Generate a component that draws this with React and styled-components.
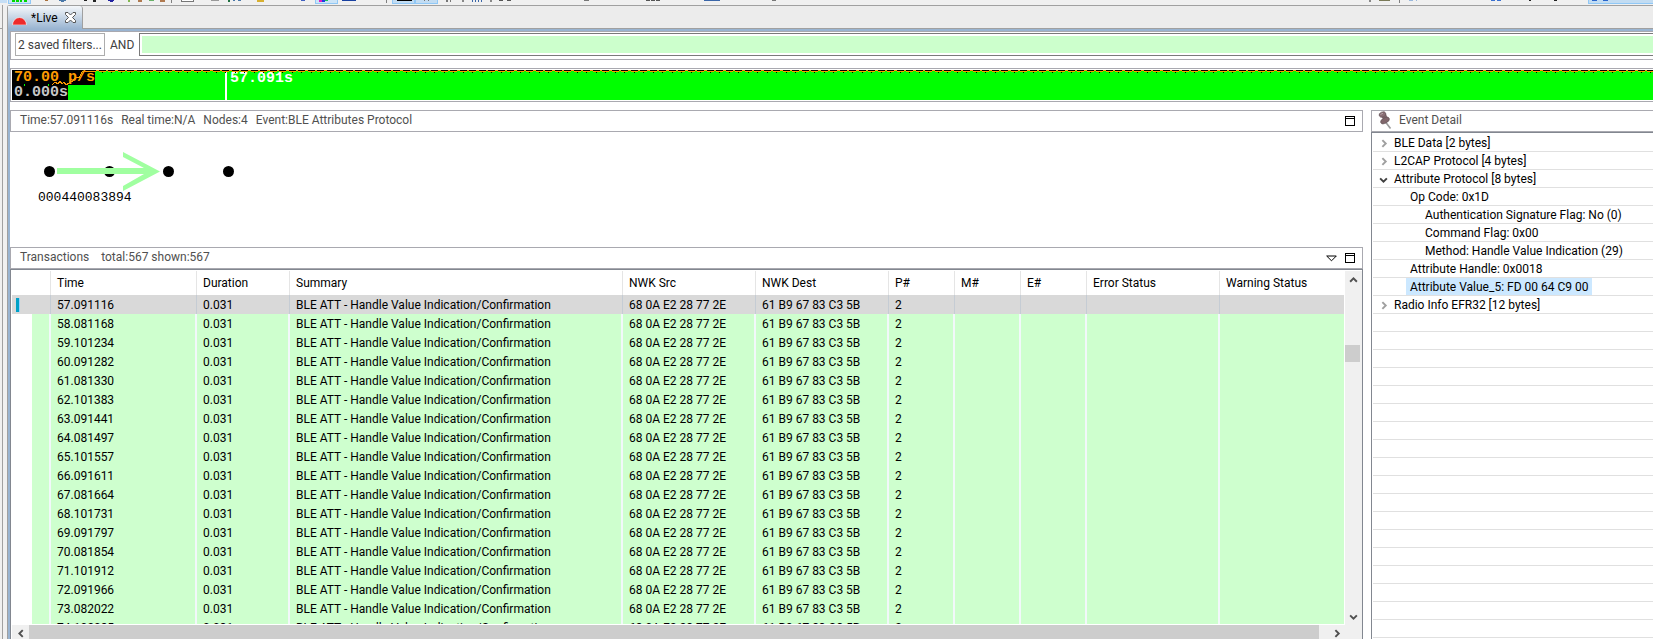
import React from "react";
import styled, { createGlobalStyle } from "styled-components";

const columns = [
	{ key: "mark", label: "", width: 39 },
	{ key: "time", label: "Time", width: 146 },
	{ key: "duration", label: "Duration", width: 93 },
	{ key: "summary", label: "Summary", width: 333 },
	{ key: "src", label: "NWK Src", width: 133 },
	{ key: "dest", label: "NWK Dest", width: 133 },
	{ key: "p", label: "P#", width: 66 },
	{ key: "m", label: "M#", width: 66 },
	{ key: "e", label: "E#", width: 66 },
	{ key: "error", label: "Error Status", width: 133 },
	{ key: "warning", label: "Warning Status" },
];

const times = [
	"57.091116",
	"58.081168",
	"59.101234",
	"60.091282",
	"61.081330",
	"62.101383",
	"63.091441",
	"64.081497",
	"65.101557",
	"66.091611",
	"67.081664",
	"68.101731",
	"69.091797",
	"70.081854",
	"71.101912",
	"72.091966",
	"73.082022",
	"74.102085",
];

const transactions = times.map((time) => ({
	time,
	duration: "0.031",
	summary: "BLE ATT - Handle Value Indication/Confirmation",
	src: "68 0A E2 28 77 2E",
	dest: "61 B9 67 83 C3 5B",
	p: "2",
}));

const eventTree = [
	{ text: "BLE Data [2 bytes]", level: 0, state: "closed" },
	{ text: "L2CAP Protocol [4 bytes]", level: 0, state: "closed" },
	{ text: "Attribute Protocol [8 bytes]", level: 0, state: "open" },
	{ text: "Op Code: 0x1D", level: 1 },
	{ text: "Authentication Signature Flag: No (0)", level: 2 },
	{ text: "Command Flag: 0x00", level: 2 },
	{ text: "Method: Handle Value Indication (29)", level: 2 },
	{ text: "Attribute Handle: 0x0018", level: 1 },
	{ text: "Attribute Value_5: FD 00 64 C9 00", level: 1, selected: true },
	{ text: "Radio Info EFR32 [12 bytes]", level: 0, state: "closed" },
];

// [x, y, width, height, colour]
const leftTools = [
	[0, 0, 7, 3, "#c5def5"],
	[8, 0, 23, 4, "#90c8f6"],
	[9, 0, 21, 3, "#cce4f7"],
	[12, 0, 3, 2, "#00d800"],
	[16, 0, 3, 2, "#00d800"],
	[20, 0, 2, 2, "#00d800"],
	[24, 0, 3, 2, "#00d800"],
	[45, 0, 3, 1, "#a9713d"],
	[59, 0, 7, 1, "#4a78a8"],
	[61, 1, 3, 1, "#4a78a8"],
	[84, 0, 3, 1, "#222"],
	[93, 0, 3, 2, "#222"],
	[108, 0, 6, 1, "#2222a0"],
	[110, 1, 3, 1, "#2222a0"],
	[128, 0, 2, 2, "#84b850"],
	[138, 0, 4, 2, "#b07a50"],
	[149, 0, 5, 1, "#68b068"],
	[160, 0, 5, 2, "#b07a50"],
	[171, 0, 1, 3, "#808080"],
	[181, 0, 13, 2, "#777"],
	[182, 0, 11, 1, "#fff"],
	[211, 0, 8, 1, "#999"],
	[228, 0, 2, 2, "#207040"],
	[233, 0, 2, 1, "#4a78a8"],
	[238, 0, 3, 1, "#4a78a8"],
	[257, 0, 7, 2, "#d8b030"],
	[301, 0, 4, 1, "#4060c0"],
	[315, 0, 23, 4, "#90c8f6"],
	[316, 0, 21, 3, "#cce4f7"],
	[319, 0, 3, 2, "#e020c0"],
	[322, 0, 3, 2, "#2040e0"],
	[325, 0, 3, 1, "#20c060"],
	[342, 0, 14, 1, "#1840a0"],
	[386, 0, 1, 3, "#808080"],
	[392, 0, 46, 4, "#90c8f6"],
	[393, 0, 21, 3, "#c2dcf2"],
	[416, 0, 21, 3, "#c2dcf2"],
	[397, 0, 15, 1, "#000"],
	[424, 0, 1, 1, "#777"],
	[428, 0, 1, 1, "#777"],
	[446, 0, 2, 2, "#777"],
	[450, 0, 1, 2, "#777"],
	[462, 0, 2, 2, "#888"],
	[472, 0, 1, 2, "#3b66a8"],
	[475, 0, 1, 2, "#3b66a8"],
	[478, 0, 1, 2, "#3b66a8"],
	[481, 0, 1, 2, "#3b66a8"],
	[490, 0, 2, 2, "#888"],
	[499, 0, 4, 1, "#555"],
	[507, 0, 4, 1, "#555"],
	[584, 0, 5, 1, "#777"],
	[646, 0, 4, 1, "#555"],
	[651, 0, 4, 1, "#555"],
	[656, 0, 4, 1, "#555"],
	[704, 0, 16, 1, "#3b66a8"],
	[772, 0, 4, 1, "#777"],
];

const rightTools = [
	[9, 0, 2, 2, "#888"],
	[19, 0, 11, 1, "#7a7a58"],
	[39, 0, 1, 3, "#808080"],
	[49, 0, 4, 1, "#9ab8dc"],
	[56, 0, 1, 1, "#9ab8dc"],
	[131, 0, 4, 1, "#3a70d0"],
	[137, 0, 4, 1, "#3a70d0"],
	[169, 0, 2, 1, "#222"],
	[194, 0, 3, 1, "#222"],
	[228, 0, 65, 4, "#90c8f6"],
	[229, 0, 64, 3, "#c2dcf2"],
	[232, 0, 5, 1, "#2a66cc"],
	[243, 0, 5, 1, "#2a66cc"],
];

const ToolStrip = ({ items, width }) => (
	<svg width={width} height="5" shapeRendering="crispEdges" aria-hidden="true">
		{items.map(([x, y, w, h, fill], id) => (
			<rect key={id} x={x} y={y} width={w} height={h} fill={fill} />
		))}
	</svg>
);

const arrows = {
	up: "M1 6 L4 3 L7 6",
	down: "M1 3 L4 6 L7 3",
	left: "M6 1 L3 4 L6 7",
	right: "M3 1 L6 4 L3 7",
};

const Arrow = ({ dir, color = "#505050" }) => (
	<svg width="9" height="9" viewBox="0 0 8 8" aria-hidden="true">
		<path d={arrows[dir]} fill="none" stroke={color} strokeWidth="1.7" />
	</svg>
);

const MaximizeIcon = () => (
	<svg width="10" height="10" shapeRendering="crispEdges" aria-hidden="true">
		<path d="M0.500 0.500 H9.500 V9.500 H0.500 Z M0 2.500 H10" fill="none" stroke="#000" />
	</svg>
);

const MenuIcon = () => (
	<svg width="11" height="7" aria-hidden="true">
		<path d="M0.700 1 H10.300 L5.500 5.800 Z" fill="none" stroke="#000" />
	</svg>
);

const PinIcon = () => (
	<svg width="14" height="18" viewBox="0 0 14 18" aria-hidden="true">
		<path d="M7.500 11 L12.500 17.500" stroke="#9a9a9a" strokeWidth="1.600" />
		<path d="M3 5 L8 3 L10 8 L6 10 Z" fill="#80666b" />
		<ellipse cx="4.500" cy="3.500" rx="3.500" ry="2.500" fill="#8a6f75" stroke="#65565a" strokeWidth="0.700" transform="rotate(-22 4.500 3.500)" />
		<ellipse cx="7" cy="9.500" rx="4.700" ry="2.600" fill="#80666b" stroke="#65565a" strokeWidth="0.700" transform="rotate(-28 7 9.500)" />
		<path d="M2.500 3.500 L5 2.200" stroke="#b9a6aa" />
	</svg>
);

const CloseIcon = () => (
	<svg width="11" height="11" viewBox="0 0 11 11" aria-hidden="true">
		<path
			d="M0.500 0.500 H3 L5.500 3 L8 0.500 H10.500 V2.500 L7.500 5.500 L10.500 8.500 V10.500 H8 L5.500 8 L3 10.500 H0.500 V8.500 L3.500 5.500 L0.500 2.500 Z"
			fill="#fff"
			stroke="#555"
		/>
	</svg>
);

const RateTrace = () => (
	<Trace aria-hidden="true">
		<defs>
			<pattern id="rate" width="19" height="3" patternUnits="userSpaceOnUse">
				<rect width="19" height="1" fill="#ff9a00" />
				<rect x="1" width="7" height="1" fill="#000" />
				<rect x="11" width="7" height="1" fill="#000" />
				<rect x="1" y="1" width="7" height="1" fill="#ff9a00" />
				<rect x="11" y="1" width="7" height="1" fill="#ff9a00" />
				<rect x="4" y="2" width="1" height="1" fill="#000" />
				<rect x="14" y="2" width="1" height="1" fill="#000" />
			</pattern>
		</defs>
		<rect x="80" width="100%" height="3" fill="url(#rate)" />
		<path d="M12.500 16 V14 M36.500 16 V14" stroke="#0f0" />
		<path d="M40 15 L43 12 L46 14 L48 11 L50 14 L52 12 L54 15 L57 13 L61 11 L64 7 L67 8 L70 2 L73 1 L82 1" fill="none" stroke="#ff9a00" />
	</Trace>
);

const NodeMap = () => (
	<svg width="300" height="114" role="img" aria-label="Nodes">
		<g fill="#000">
			<circle cx="39.500" cy="39.500" r="5.500" />
			<circle cx="99.500" cy="39.500" r="5.500" />
			<circle cx="158.500" cy="39.500" r="5.500" />
			<circle cx="218.500" cy="39.500" r="5.500" />
		</g>
		<path d="M47 36 H134 L113 25 V20 L150 39.500 L113 59 V54 L134 42 H47 Z" fill="#a0ffa0" />
		<NodeLabel x="28" y="69">
			000440083894
		</NodeLabel>
	</svg>
);

function EventTree() {
	return (
		<Tree>
			{eventTree.map(({ text, level, state, selected }) => (
				<TreeItem key={text} $level={level}>
					<TreeToggle>
						{state === "closed" && <Arrow dir="right" color="#a0a0a0" />}
						{state === "open" && <Arrow dir="down" color="#404040" />}
					</TreeToggle>
					<TreeText $selected={selected}>{text}</TreeText>
				</TreeItem>
			))}
		</Tree>
	);
}

function Transactions() {
	return (
		<TableFrame>
			<TableView>
				<Table>
					<colgroup>
						{columns.map(({ key, width }) => (
							<col key={key} width={width} />
						))}
					</colgroup>
					<thead>
						<tr>
							{columns.map(({ key, label }) => (
								<HeadCell key={key}>{label}</HeadCell>
							))}
						</tr>
					</thead>
					<tbody>
						{transactions.map((row, id) => (
							<Row key={row.time} $selected={id === 0}>
								{columns.map(({ key }) => (
									<Cell key={key}>{key === "mark" && id === 0 ? <Marker /> : row[key]}</Cell>
								))}
							</Row>
						))}
					</tbody>
				</Table>
			</TableView>
			<VerticalBar>
				<ScrollButton aria-label="Scroll up">
					<Arrow dir="up" />
				</ScrollButton>
				<VerticalThumb />
				<ScrollButton aria-label="Scroll down">
					<Arrow dir="down" />
				</ScrollButton>
			</VerticalBar>
			<HorizontalBar>
				<ScrollButton aria-label="Scroll left">
					<Arrow dir="left" />
				</ScrollButton>
				<HorizontalThumb />
				<ScrollButton aria-label="Scroll right">
					<Arrow dir="right" />
				</ScrollButton>
			</HorizontalBar>
		</TableFrame>
	);
}

function App() {
	return (
		<>
			<GlobalStyle />
			<Window>
				<Toolbar>
					<ToolStrip items={leftTools} width={800} />
					<ToolStrip items={rightTools} width={293} />
				</Toolbar>
				<Workbench>
					<Rail>
						<RailCorner />
					</Rail>
					<Editor>
						<TabBar>
							<Tab>
								<svg width="15" height="8" aria-hidden="true">
									<path d="M0.500 8 A7 7.500 0 0 1 14.500 8 Z" fill="#ee2a2a" stroke="#fff" strokeOpacity="0.600" />
								</svg>
								<TabName>*Live</TabName>
								<IconButton aria-label="Close">
									<CloseIcon />
								</IconButton>
							</Tab>
						</TabBar>
						<Page>
							<FilterBar>
								<FilterButton>2 saved filters...</FilterButton>
								<label htmlFor="filter">AND</label>
								<FilterInput id="filter" type="text" />
							</FilterBar>
							<Timeline>
								<Graph>
									<Readouts>
										<Readout $color="#ff9a00">70.00 p/s</Readout>
										<Readout $color="#c8c8c8">0.000s</Readout>
									</Readouts>
									<Cursor>57.091s</Cursor>
									<RateTrace />
								</Graph>
							</Timeline>
							<Panes>
								<MainPane>
									<PaneHeader $tight>
										<span>Time:57.091116s</span>
										<span>Real time:N/A</span>
										<span>Nodes:4</span>
										<span>Event:BLE Attributes Protocol</span>
										<Actions>
											<IconButton aria-label="Maximize map">
												<MaximizeIcon />
											</IconButton>
										</Actions>
									</PaneHeader>
									<MapArea>
										<NodeMap />
									</MapArea>
									<PaneHeader>
										<span>Transactions</span>
										<span>total:567 shown:567</span>
										<Actions>
											<IconButton aria-label="View menu">
												<MenuIcon />
											</IconButton>
											<IconButton aria-label="Maximize transactions">
												<MaximizeIcon />
											</IconButton>
										</Actions>
									</PaneHeader>
									<Transactions />
								</MainPane>
								<DetailPane>
									<DetailHeader>
										<PinIcon />
										<span>Event Detail</span>
									</DetailHeader>
									<EventTree />
								</DetailPane>
							</Panes>
						</Page>
					</Editor>
				</Workbench>
			</Window>
		</>
	);
}

export default App;

const GlobalStyle = createGlobalStyle`
	* {
		box-sizing: border-box;
	}

	body {
		margin: 0;
		overflow: hidden;
		font-family: "Roboto", sans-serif;
		font-size: 12px;
		line-height: 18px;
		color: #000;
	}

	button, input {
		font: inherit;
		color: inherit;
		border-radius: 0;
		margin: 0;
	}

	svg {
		display: block;
		flex-shrink: 0;
	}
`;

const Window = styled.div`
	height: 100vh;
	display: flex;
	flex-direction: column;
	background: #f0f0f0;
`;

const Toolbar = styled.header`
	display: flex;
	justify-content: space-between;
	height: 5px;
`;

const Workbench = styled.div`
	flex: 1;
	min-height: 0;
	display: flex;
	gap: 4px;
`;

const Rail = styled.div`
	width: 3px;
	border-right: 1px solid #a0a0a0;
`;

const RailCorner = styled.div`
	height: 24px;
	border-bottom: 1px solid #a0a0a0;
`;

const Editor = styled.section`
	flex: 1;
	min-width: 0;
	display: flex;
	flex-direction: column;
	border-left: 1px solid #a0a0a0;
	border-top: 1px solid #a0a0a0;
	border-top-left-radius: 3px;
`;

const TabBar = styled.div`
	display: flex;
	height: 23px;
	background: #ececec;
	border-bottom: 1px solid #a0a0a0;
`;

const Tab = styled.div`
	display: flex;
	align-items: center;
	height: 23px;
	width: 75px;
	padding-left: 4px;
	background: linear-gradient(#f4f7fa, #99b4d1);
	border-right: 1px solid #a0a0a0;
	border-top-right-radius: 3px;

	> svg {
		align-self: flex-end;
		margin-bottom: 4px;
	}
`;

const TabName = styled.span`
	margin: 0 7px 0 4px;
`;

const IconButton = styled.button`
	padding: 0;
	border: 0;
	background: none;
`;

const Page = styled.div`
	flex: 1;
	min-height: 0;
	display: flex;
	flex-direction: column;
	border-left: 2px solid #99b4d1;
	border-top: 2px solid #99b4d1;
	background: #fff;
`;

const FilterBar = styled.div`
	display: flex;
	align-items: center;
	height: 29px;
	padding: 1px 0 3px 4px;
	border: 1px solid #a9a9b0;
	border-right: 0;
	color: #404040;

	label {
		margin: 0 5px;
	}
`;

const FilterButton = styled.button`
	align-self: flex-end;
	width: 90px;
	height: 23px;
	padding: 0;
	border: 1px solid #adadad;
	background: #fff;
	white-space: nowrap;
`;

const FilterInput = styled.input`
	flex: 1;
	height: 23px;
	border: 1px solid #7a7a7a;
	border-right: 0;
	padding: 2px 0 2px 2px;
	background: #ccffcc content-box;
`;

const Timeline = styled.div`
	margin: 8px 0;
	padding: 1px 0 1px 1px;
	border: 1px solid #a9a9b0;
	border-right: 0;
`;

const Graph = styled.div`
	position: relative;
	display: flex;
	height: 30px;
	background: #00ff00;
	font-family: "Liberation Mono", monospace;
	font-size: 15px;
	line-height: 15px;
`;

const Trace = styled.svg`
	position: absolute;
	inset: 0;
	width: 100%;
	height: 100%;
	shape-rendering: crispEdges;
`;

const Readouts = styled.div`
	display: flex;
	flex-direction: column;
	align-items: flex-start;
	width: 213px;
`;

const Readout = styled.span`
	padding-left: 2px;
	background: #000;
	color: ${({ $color }) => $color};
	font-weight: bold;
`;

const Cursor = styled.div`
	padding-left: 3px;
	border-left: 2px solid #fff;
	line-height: 17px;
	color: #fff;
	font-weight: bold;
`;

const Panes = styled.div`
	flex: 1;
	min-height: 0;
	display: grid;
	grid-template-columns: minmax(0, 1fr) 282px;
	grid-template-rows: minmax(0, 1fr);
	gap: 8px;
`;

const MainPane = styled.main`
	display: flex;
	flex-direction: column;
	min-height: 0;
`;

const PaneHeader = styled.div`
	flex-shrink: 0;
	display: flex;
	gap: ${({ $tight }) => ($tight ? 8 : 12)}px;
	height: 22px;
	padding: 0 7px 0 9px;
	border: 1px solid #a9a9b0;
	color: #505050;
`;

const Actions = styled.div`
	display: flex;
	align-items: center;
	gap: 8px;
	margin-left: auto;
`;

const MapArea = styled.div`
	height: 115px;
	flex-shrink: 0;
`;

const NodeLabel = styled.text`
	font-family: "Liberation Mono", monospace;
	font-size: 13px;
`;

const TableFrame = styled.div`
	flex: 1;
	min-height: 0;
	display: grid;
	grid-template-columns: minmax(0, 1fr) 17px;
	grid-template-rows: minmax(0, 1fr) 14px;
	border: 1px solid #828790;
	border-bottom: 0;
	padding: 1px 0 0 1px;
	background: #fff;
`;

const TableView = styled.div`
	overflow: hidden;
	padding-right: 1px;
	margin-bottom: 1px;
`;

const Table = styled.table`
	width: 100%;
	table-layout: fixed;
	border-collapse: separate;
	border-spacing: 0;
	white-space: nowrap;
`;

const HeadCell = styled.th`
	height: 24px;
	padding: 0 6px;
	border-right: 1px solid #e5e5e5;
	font-weight: normal;
	text-align: left;

	&:last-child {
		border-right: 0;
	}
`;

const Cell = styled.td`
	height: 19px;
	padding: 0 6px;
	background: #ceffce;
	border-right: 2px solid #f2f8fa;

	&:first-child {
		padding: 0 4px;
		background: linear-gradient(90deg, #fff 20px, #ceffce 20px);
	}

	&:last-child {
		border-right: 0;
	}
`;

const Row = styled.tr`
	${({ $selected }) =>
		$selected &&
		`
		${Cell}, ${Cell}:first-child {
			background: #d9d9d9;
			border-right: 1px solid #c5ccd4;
		}
		${Cell}:last-child {
			border-right: 0;
		}
	`}
`;

const Marker = styled.div`
	width: 4px;
	height: 14px;
	background: #00a0c6;
	border-right: 1px solid #99d1ff;
`;

const VerticalBar = styled.div`
	display: flex;
	flex-direction: column;
	background: #f0f0f0;
`;

const VerticalThumb = styled.div`
	height: 17px;
	width: 15px;
	margin: 57px 0 auto;
	background: #cdcdcd;
`;

const HorizontalBar = styled.div`
	grid-column: 1 / -1;
	display: flex;
	padding-right: 17px;
	background: #f0f0f0;
`;

const HorizontalThumb = styled.div`
	flex: 1;
	margin-right: 9px;
	background: #cdcdcd;
`;

const ScrollButton = styled.button`
	display: flex;
	align-items: center;
	justify-content: center;
	flex-shrink: 0;
	width: 17px;
	height: 17px;
	padding: 0;
	border: 0;
	background: #f0f0f0;
`;

const DetailPane = styled.aside`
	display: flex;
	flex-direction: column;
	min-height: 0;
	overflow: hidden;
`;

const DetailHeader = styled(PaneHeader)`
	padding: 0 0 0 6px;
	gap: 7px;
	border-right: 0;
`;

const Tree = styled.ul`
	flex: 1;
	margin: 0;
	padding: 1px 0 0 1px;
	list-style-type: none;
	border-left: 1px solid #828790;
	border-top: 1px solid #828790;
	background: repeating-linear-gradient(#fff 0 17px, #e0e0e0 17px 18px) content-box;
`;

const TreeItem = styled.li`
	display: flex;
	height: 18px;
	padding-left: ${({ $level }) => [0, 16, 31][$level]}px;
`;

const TreeToggle = styled.span`
	display: flex;
	align-items: center;
	justify-content: flex-end;
	width: 15px;
	padding-top: 1px;
	margin-right: 2px;
`;

const TreeText = styled.span`
	height: 17px;
	padding: 0 4px;
	line-height: 18px;
	white-space: nowrap;
	background: ${({ $selected }) => ($selected ? "#cce8ff" : "none")};
`;
